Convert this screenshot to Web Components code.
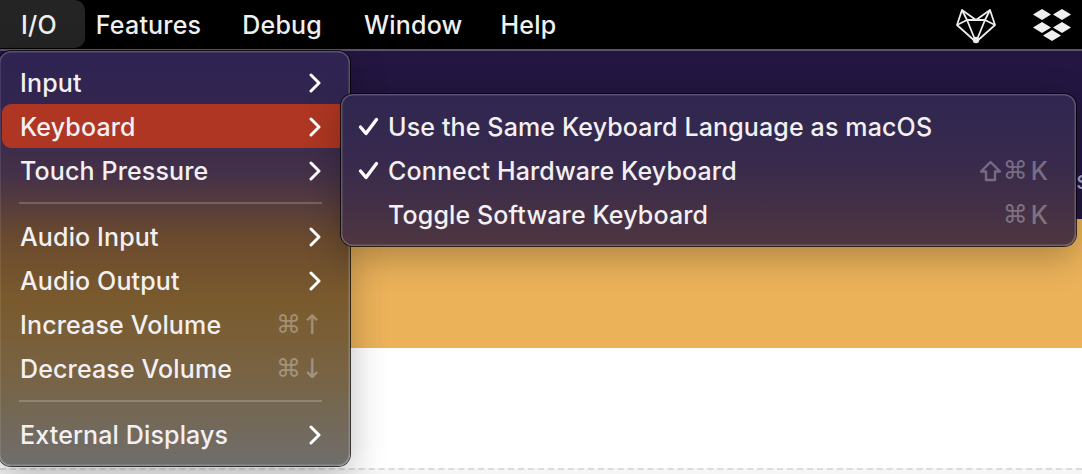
<!DOCTYPE html>
<html>
<head>
<meta charset="utf-8">
<title>I/O menu</title>
<style>
  html, body { margin: 0; height: 100%; overflow: hidden; background: #fff; }
  body { font-family: Inter, "Liberation Sans", sans-serif; }
</style>
</head>
<body>
<sim-desktop>
  <sim-menubar slot="bar">
    <bar-item active>I/O</bar-item>
    <bar-item>Features</bar-item>
    <bar-item style="margin-left:-1px">Debug</bar-item>
    <bar-item>Window</bar-item>
    <bar-item style="margin-left:-4px">Help</bar-item>
    <fox-icon slot="tray"></fox-icon>
    <box-icon slot="tray"></box-icon>
  </sim-menubar>

  <pop-menu slot="menus" class="main">
    <menu-row sub>Input</menu-row>
    <menu-row sub selected>Keyboard</menu-row>
    <menu-row sub>Touch Pressure</menu-row>
    <menu-sep></menu-sep>
    <menu-row sub>Audio Input</menu-row>
    <menu-row sub>Audio Output</menu-row>
    <menu-row keys="⌘↑">Increase Volume</menu-row>
    <menu-row keys="⌘↓">Decrease Volume</menu-row>
    <menu-sep></menu-sep>
    <menu-row sub>External Displays</menu-row>
  </pop-menu>

  <pop-menu slot="menus" class="keyboard">
    <menu-row checked indent>Use the Same Keyboard Language as macOS</menu-row>
    <menu-row checked indent shift keys="⌘K">Connect Hardware Keyboard</menu-row>
    <menu-row indent keys="⌘K">Toggle Software Keyboard</menu-row>
  </pop-menu>
</sim-desktop>

<script>
class SimDesktop extends HTMLElement {
  constructor() {
    super();
    this.attachShadow({mode: 'open'}).innerHTML = `
      <style>
        :host { display: flex; flex-direction: column; width: 1082px; height: 474px; position: relative; overflow: hidden; }
        .purple { height: 168px; background: #231640; border-top: 2px solid #5b5170; display: flex; justify-content: flex-end; align-items: flex-end; }
        .purple span { color: #a9a6cf; font-size: 25px; line-height: 30px; margin: 0 -8px 24px 0; width: 14px; }
        .orange { height: 129px; background: #ebb25a; }
        .white { height: 120px; background: #fff; }
        .foot { flex: 1; background: #f6f6f6; border-top: 2px dashed #dcdcdc; }
      </style>
      <slot name="bar"></slot>
      <div class="purple"><span>s</span></div>
      <div class="orange"></div>
      <div class="white"></div>
      <div class="foot"></div>
      <slot name="menus"></slot>`;
  }
}
customElements.define('sim-desktop', SimDesktop);

class SimMenubar extends HTMLElement {
  constructor() {
    super();
    this.attachShadow({mode: 'open'}).innerHTML = `
      <style>
        :host { display: flex; align-items: stretch; height: 49px; background: #000; flex: none; }
        nav { display: flex; flex: 1; }
        .tray { display: flex; align-items: center; gap: 37px; padding-right: 11px; }
      </style>
      <nav><slot></slot></nav>
      <div class="tray"><slot name="tray"></slot></div>`;
  }
}
customElements.define('sim-menubar', SimMenubar);

class BarItem extends HTMLElement {
  constructor() {
    super();
    this.attachShadow({mode: 'open'}).innerHTML = `
      <style>
        :host { display: block; padding: 0 21px; color: #f0f0f0; font-size: 25px; font-weight: 450; letter-spacing: .2px; line-height: 50px; height: 48px; }
        :host([active]) { background: #242424; border-bottom-right-radius: 10px; border-top-right-radius: 10px; padding: 0 28px 0 21px; margin-right: -10px; }
      </style>
      <slot></slot>`;
  }
}
customElements.define('bar-item', BarItem);

class FoxIcon extends HTMLElement {
  constructor() {
    super();
    this.attachShadow({mode: 'open'}).innerHTML = `
      <style>:host { display: block; width: 40px; height: 36px; margin-top: 2px; } svg { display: block; }</style>
      <svg width="40" height="36" viewBox="0 0 40 36" fill="none" stroke="#ececec" stroke-width="1.8" stroke-linejoin="round">
        <path d="M6 2 L1 17 L20 34 L39 17 L34 2 L20 12 Z"/>
        <path d="M6 2 L11 12 H29 L34 2"/>
        <path d="M1 17 L11 12 L20 34 L29 12 L39 17"/>
        <circle cx="20" cy="32" r="3.2" fill="#ececec" stroke="none"/>
      </svg>`;
  }
}
customElements.define('fox-icon', FoxIcon);

class BoxIcon extends HTMLElement {
  constructor() {
    super();
    this.attachShadow({mode: 'open'}).innerHTML = `
      <style>:host { display: block; width: 38px; height: 34px; margin-top: 0; } svg { display: block; }</style>
      <svg width="38" height="34" viewBox="0 0 38 34" fill="#f0f0f0">
        <path d="M9 1 L18 6.5 L9 12 L0 6.5 Z"/>
        <path d="M29 1 L38 6.5 L29 12 L20 6.5 Z"/>
        <path d="M9 14 L18 19.5 L9 25 L0 19.5 Z"/>
        <path d="M29 14 L38 19.5 L29 25 L20 19.5 Z"/>
        <path d="M19 22 L28 27.5 L19 33 L10 27.5 Z"/>
      </svg>`;
  }
}
customElements.define('box-icon', BoxIcon);

class PopMenu extends HTMLElement {
  constructor() {
    super();
    this.attachShadow({mode: 'open'}).innerHTML = `
      <style>
        :host { display: block; position: absolute; box-sizing: border-box; border-radius: 12px; color: #f3f0f3; font-size: 25px; font-weight: 450; letter-spacing: .14px;
                box-shadow: 0 0 0 1px rgba(0,0,0,.75), inset 0 0 0 1.5px rgba(255,255,255,.2), 0 10px 36px rgba(0,0,0,.28); }
        :host(.main) { --row-shift: 2px; --row-left: 18px; --row-right: 26px; left: -1px; top: 51px; width: 351px; height: 415px; padding: 9px 3px;
                background: linear-gradient(180deg, #2e2352 0%, #33264f 15%, #453148 30%, #6a4a2e 45%, #7a5a2d 60%, #786344 78%, #6f6e6c 100%); }
        :host(.keyboard) { --row-right: 25px; left: 341px; top: 94px; width: 735px; height: 152px; padding: 11px 3px;
                background: linear-gradient(180deg, #2f2650 0%, #382a4d 45%, #4e3640 100%); }
      </style>
      <slot></slot>`;
  }
}
customElements.define('pop-menu', PopMenu);

class MenuRow extends HTMLElement {
  constructor() {
    super();
    const keys = this.getAttribute('keys');
    const check = this.hasAttribute('checked')
      ? `<svg class="check" width="21" height="19" viewBox="0 0 21 19" fill="none" stroke="#fff" stroke-width="3.4" stroke-linecap="round" stroke-linejoin="round"><path d="M2.5 10 L8 16.5 L18.5 2.5"/></svg>`
      : '';
    const chevron = this.hasAttribute('sub')
      ? `<svg class="chev" width="12" height="20" viewBox="0 0 12 20" fill="none" stroke="#fff" stroke-width="3" stroke-linecap="round" stroke-linejoin="round"><path d="M2 2 L10 10 L2 18"/></svg>`
      : '';
    const shift = this.hasAttribute('shift')
      ? `<svg class="shift" width="23" height="22" viewBox="0 0 23 22" fill="none" stroke="rgba(255,255,255,.3)" stroke-width="2.4" stroke-linejoin="round"><path d="M11.5 2 L21 11.5 H16 V20 H7 V11.5 H2 Z"/></svg>`
      : '';
    let keyHtml = '';
    if (keys) {
      keyHtml = `<span class="keys">${shift}<span class="cmd">${keys[0]}</span><span class="last ${keys[1] === 'K' ? 'k' : 'arrow'}">${keys[1]}</span></span>`;
    }
    this.attachShadow({mode: 'open'}).innerHTML = `
      <style>
        :host { display: flex; align-items: center; box-sizing: border-box; height: 44px; line-height: 40px; padding: var(--row-shift, 0px) var(--row-right, 19px) 0 var(--row-left, 19px); border-radius: 9px; position: relative; }
        :host([selected]) { background: #ae3622; }
        :host([indent]) { padding-left: 44px; }
        .label { flex: 1; white-space: nowrap; }
        .check { position: absolute; left: 14px; top: 12px; }
        .keys { display: flex; align-items: center; color: rgba(255,255,255,.32); letter-spacing: 0; }
        .shift { margin-right: 1px; }
        .cmd { font-family: "DejaVu Sans", sans-serif; font-size: 25px; font-weight: 400; }
        .last.k { margin-left: 3px; }
        .last.arrow { font-family: "DejaVu Sans", sans-serif; font-size: 27px; font-weight: 400; width: 22px; text-align: center; margin-right: -2px; }
      </style>
      ${check}<span class="label"><slot></slot></span>${keyHtml}${chevron}`;
  }
}
customElements.define('menu-row', MenuRow);

class MenuSep extends HTMLElement {
  constructor() {
    super();
    this.attachShadow({mode: 'open'}).innerHTML = `
      <style>:host { display: block; height: 22px; box-sizing: border-box; padding: 10px 25px 10px 17px; } div { height: 2px; background: rgba(255,255,255,.2); }</style>
      <div></div>`;
  }
}
customElements.define('menu-sep', MenuSep);
</script>
</body>
</html>
